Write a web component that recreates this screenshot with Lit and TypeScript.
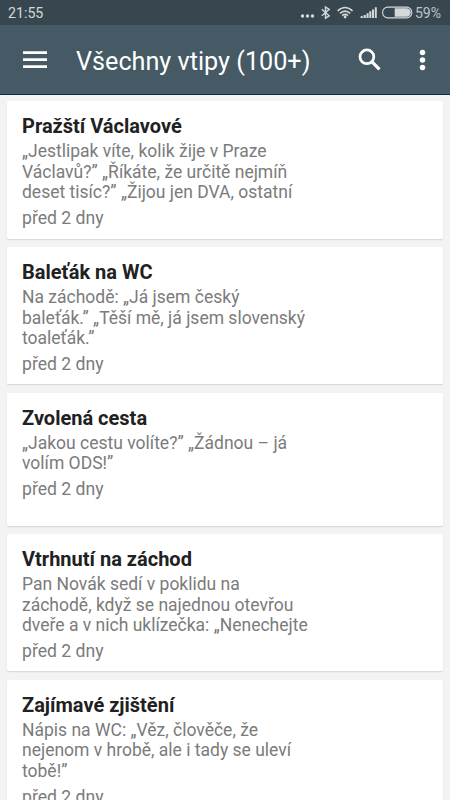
import { LitElement, html, css } from "lit";
import { customElement, property } from "lit/decorators.js";

interface Joke {
  title: string;
  lines: string[];
  age: string;
}

const jokes: Joke[] = [
  {
    title: "Pražští Václavové",
    lines: ["„Jestlipak víte, kolik žije v Praze", "Václavů?” „Říkáte, že určitě nejmíň", "deset tisíc?” „Žijou jen DVA, ostatní"],
    age: "před 2 dny",
  },
  {
    title: "Baleťák na WC",
    lines: ["Na záchodě: „Já jsem český", "baleťák.” „Těší mě, já jsem slovenský", "toaleťák.”"],
    age: "před 2 dny",
  },
  {
    title: "Zvolená cesta",
    lines: ["„Jakou cestu volíte?” „Žádnou – já", "volím ODS!”"],
    age: "před 2 dny",
  },
  {
    title: "Vtrhnutí na záchod",
    lines: ["Pan Novák sedí v poklidu na", "záchodě, když se najednou otevřou", "dveře a v nich uklízečka: „Nenechejte"],
    age: "před 2 dny",
  },
  {
    title: "Zajímavé zjištění",
    lines: ["Nápis na WC: „Věz, člověče, že", "nejenom v hrobě, ale i tady se uleví", "tobě!”"],
    age: "před 2 dny",
  },
];

@customElement("status-bar")
class StatusBar extends LitElement {
  static styles = css`
    :host {
      display: flex;
      align-items: center;
      flex: none;
      height: 25px;
      padding: 0 7px 0 8px;
      background: #38474f;
      color: #d3d8da;
      font-family: Roboto, sans-serif;
    }
    .clock {
      flex: 1;
      font-size: 14.2px;
      line-height: 25px;
      padding-top: 1px;
    }
    svg {
      flex: none;
      fill: currentColor;
    }
    .charge {
      font-size: 14px;
      line-height: 25px;
      padding-top: 1px;
      width: 28px;
      white-space: nowrap;
      color: #bdc4c8;
    }
  `;
  render() {
    return html`
      <div class="clock">21:55</div>
      <svg width="116" height="25" viewBox="298 0 116 25">
        <circle cx="301.5" cy="16" r="1.7" />
        <circle cx="306.5" cy="16" r="1.7" />
        <circle cx="311.5" cy="16" r="1.7" />
        <path d="M320.8 9.3 L328.2 15.8 L324.5 18.2 V7 L328.2 9.4 L320.8 15.8" fill="none" stroke="currentColor" stroke-width="1.4" />
        <g fill="none" stroke="currentColor" stroke-width="1.6">
          <path d="M336.6 11 Q344 4 351.6 11" />
          <path d="M339 13.4 Q344 8.7 349.2 13.4" />
          <path d="M341.2 15.6 Q344 13.2 347 15.6" />
        </g>
        <circle cx="344.1" cy="17" r="1.4" />
        <path d="M359.5 18 V16.6 L361.8 15.8 V18Z M362.6 18 V15 H364.8 V18Z M365.5 18 V13.2 H367.6 V18Z M368.3 18 V11.3 H370.3 V18Z M371 18 V9.4 H373 V18Z M373.8 18 V7.2 H375.8 V18Z" />
        <rect x="381.6" y="7.1" width="29.2" height="10.8" rx="5.2" fill="none" stroke="currentColor" stroke-width="1.1" />
        <path d="M393.7 8.3 H405.5 A4.2 4.2 0 0 1 405.5 16.7 H393.7Z" />
      </svg>
      <div class="charge">59%</div>
    `;
  }
}

@customElement("app-bar")
class AppBar extends LitElement {
  static styles = css`
    :host {
      display: flex;
      flex: none;
      box-sizing: border-box;
      height: 70px;
      background: #455a64;
      border-bottom: 1px solid #092c48;
      color: #fff;
      font-family: Roboto, sans-serif;
    }
    svg {
      flex: none;
      fill: currentColor;
    }
    .heading {
      flex: 1;
      margin: 0;
      padding-top: 2px;
      font-size: 25.2px;
      font-weight: 400;
      line-height: 70px;
      white-space: nowrap;
    }
  `;
  render() {
    return html`
      <svg width="76" height="69" viewBox="0 25 76 69">
        <path d="M23 51.2h24v2.8H23z M23 58.2h24v2.8H23z M23 65.2h24v2.8H23z" />
      </svg>
      <h1 class="heading">Všechny vtipy (100+)</h1>
      <svg width="100" height="69" viewBox="350 25 100 69">
        <circle cx="366.9" cy="56.8" r="6.9" fill="none" stroke="currentColor" stroke-width="2.7" />
        <path d="M371.8 61.7 L379.5 69.4" stroke="currentColor" stroke-width="3.3" />
        <circle cx="422.5" cy="52.6" r="2.75" />
        <circle cx="422.5" cy="60" r="2.75" />
        <circle cx="422.5" cy="67.5" r="2.75" />
      </svg>
    `;
  }
}

@customElement("joke-card")
class JokeCard extends LitElement {
  @property({ attribute: false }) joke!: Joke;
  static styles = css`
    :host {
      display: block;
      flex: none;
      box-sizing: border-box;
      min-height: 133px;
      padding: 13px 15.5px 10px;
      background: #fff;
      border-radius: 1.5px;
      box-shadow: 0 1px 1.5px rgba(0, 0, 0, 0.13);
      font-family: Roboto, sans-serif;
      white-space: nowrap;
    }
    .title {
      margin: 0;
      font-size: 20px;
      font-weight: 700;
      line-height: 25px;
      color: #212121;
    }
    .text {
      margin: 2.4px 0 0;
      font-size: 17.5px;
      line-height: 20.4px;
      color: #7b7b7b;
    }
    .line {
      display: block;
    }
    .age {
      margin-top: 5.6px;
      font-size: 17.6px;
      line-height: 20.4px;
      color: #7b7b7b;
    }
  `;
  render() {
    return html`
      <h2 class="title">${this.joke.title}</h2>
      <p class="text">${this.joke.lines.map((l) => html`<span class="line">${l}</span>`)}</p>
      <div class="age">${this.joke.age}</div>
    `;
  }
}

@customElement("app-root")
class AppRoot extends LitElement {
  static styles = css`
    :host {
      display: flex;
      flex-direction: column;
      height: 100vh;
      overflow: hidden;
      background: #f3f3f3;
    }
    .feed {
      flex: 1;
      min-height: 0;
      display: flex;
      flex-direction: column;
      gap: 8.2px;
      padding: 6px 6.7px 0 6.5px;
      overflow: hidden;
    }
  `;
  render() {
    return html`
      <status-bar></status-bar>
      <app-bar></app-bar>
      <main class="feed">${jokes.map((j) => html`<joke-card .joke=${j}></joke-card>`)}</main>
    `;
  }
}
